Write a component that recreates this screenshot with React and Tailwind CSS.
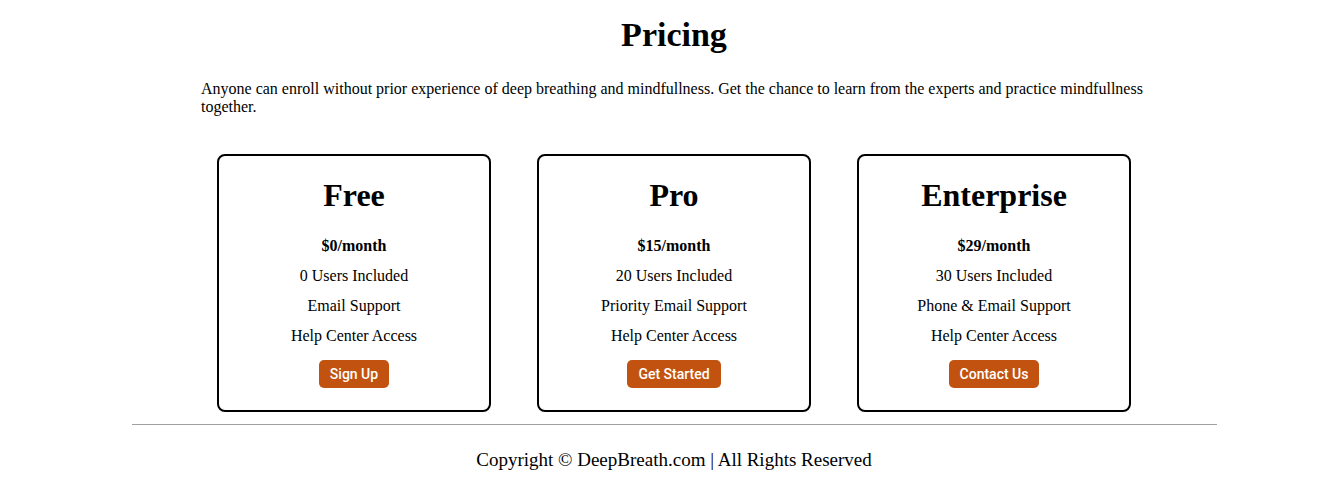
export default function App() {
  const plans = [
    { name: "Free", price: "$0/month", users: "0 Users Included", support: "Email Support", cta: "Sign Up" },
    { name: "Pro", price: "$15/month", users: "20 Users Included", support: "Priority Email Support", cta: "Get Started" },
    { name: "Enterprise", price: "$29/month", users: "30 Users Included", support: "Phone & Email Support", cta: "Contact Us" },
  ];
  return (
    <div className="bg-white text-black pl-[10px] min-h-[494px]" style={{ fontFamily: '"Liberation Serif", "Times New Roman", serif' }}>
      <h1 className="text-[34px] font-bold text-center leading-[39px] pt-[15px]">Pricing</h1>
      <p className="w-[946px] mx-auto mt-[26px] text-[16px] leading-[18px]">
        Anyone can enroll without prior experience of deep breathing and mindfullness. Get the chance to learn from the experts and practice mindfullness together.
      </p>
      <div className="flex justify-center gap-[46px] mt-[38px]">
        {plans.map((p) => (
          <div key={p.name} className="w-[274px] h-[258px] border-2 border-black rounded-[8px] flex flex-col items-center pt-[21px]">
            <h2 className="text-[32px] font-bold leading-[37px]">{p.name}</h2>
            <div className="mt-[17px] flex flex-col items-center text-[16px] leading-[30px]">
              <div className="font-bold">{p.price}</div>
              <div>{p.users}</div>
              <div>{p.support}</div>
              <div>Help Center Access</div>
            </div>
            <button
              className="mt-[9px] h-[28px] px-[11px] rounded-[5px] bg-[#c2520f] text-white text-[14px] font-medium"
              style={{ fontFamily: 'Roboto, "Liberation Sans", Arial, sans-serif' }}
            >
              {p.cta}
            </button>
          </div>
        ))}
      </div>
      <div className="w-[1085px] mx-auto mt-[12px] border-t border-[#a0a0a0]" />
      <p className="text-center text-[19px] leading-[22px] mt-[24px]">Copyright © DeepBreath.com | All Rights Reserved</p>
    </div>
  );
}
